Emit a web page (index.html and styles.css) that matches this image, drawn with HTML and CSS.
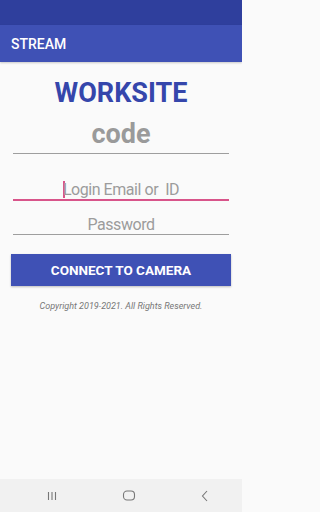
FILE: index.html
```html
<!DOCTYPE html>
<html>
<head>
<meta charset="utf-8">
<link rel="stylesheet" href="styles.css">
</head>
<body>
<div class="screen">
  <div class="status-bar"></div>
  <div class="app-bar"><span class="app-title">STREAM</span></div>
  <main class="content">
    <h1 class="brand">WORKSITE</h1>
    <div class="field field-code"><span class="code-text">code</span></div>
    <div class="field field-login"><span class="cursor"></span><span class="placeholder">Login Email or&nbsp; ID</span></div>
    <div class="field field-pass"><span class="placeholder">Password</span></div>
    <div class="button">CONNECT TO CAMERA</div>
    <p class="copyright">Copyright 2019-2021. All Rights Reserved.</p>
  </main>
  <nav class="nav-bar">
    <svg class="nav-icon" width="12" height="10" viewBox="0 0 12 10"><path d="M2.5 1v8M6 1v8M9.5 1v8" stroke="#777" stroke-width="1.1" fill="none"/></svg>
    <svg class="nav-icon" width="14" height="11" viewBox="0 0 14 11"><rect x="1.5" y="1" width="11" height="9" rx="3.5" stroke="#777" stroke-width="1.1" fill="none"/></svg>
    <svg class="nav-icon" width="10" height="12" viewBox="0 0 10 12"><path d="M7 1 L2.5 6 L7 11" stroke="#777" stroke-width="1.1" fill="none"/></svg>
  </nav>
</div>
</body>
</html>
```
FILE: styles.css
```css
* { box-sizing: border-box; }
html, body { margin: 0; padding: 0; }
body { font-family: Roboto, "Liberation Sans", sans-serif; background: #fafafa; }
.screen { width: 242px; height: 512px; display: flex; flex-direction: column; overflow: hidden; }
.status-bar { height: 25px; background: #2f3f9d; flex: none; }
.app-bar { height: 37px; background: #3f51b5; flex: none; display: flex; align-items: center; padding-left: 11px; box-shadow: 0 1px 2px rgba(0,0,0,0.2); position: relative; }
.app-title { color: #fff; font-size: 14px; font-weight: 500; line-height: 16px; padding-top: 1px; }
.content { flex: 1; background: #fafafa; display: flex; flex-direction: column; padding-top: 15px; }
.brand { margin: 0; text-align: center; font-size: 27px; line-height: 32px; font-weight: 700; color: #3546ab; }
.field { margin: 0 13px; text-align: center; }
.field-code { margin-top: 9px; border-bottom: 1px solid #9e9e9e; padding-bottom: 3px; }
.code-text { font-size: 27px; line-height: 32px; font-weight: 700; color: #9a9a9a; display: block; }
.field-login { margin-top: 27px; border-bottom: 2px solid #d8548a; line-height: 18px; height: 20px; position: relative; }
.field-pass { margin-top: 15px; border-bottom: 1px solid #9e9e9e; line-height: 18px; height: 19px; }
.placeholder { font-size: 16px; letter-spacing: -0.45px; color: #9c9c9c; }
.cursor { display: inline-block; width: 2px; height: 17px; background: #d8548a; vertical-align: -3px; margin-right: -2px; }
.button { margin: 19px 11px 0; height: 32px; background: #3f51b5; color: #fff; font-size: 13.5px; font-weight: 700; display: flex; align-items: center; justify-content: center; box-shadow: 0 1px 2px rgba(0,0,0,0.25); }
.copyright { margin: 15px 0 0; text-align: center; font-size: 9px; font-style: italic; color: #777; }
.nav-bar { height: 33px; flex: none; background: #f1f1f1; display: flex; align-items: center; justify-content: space-between; padding: 0 32px 0 46px; }
.nav-icon { display: block; }
```
